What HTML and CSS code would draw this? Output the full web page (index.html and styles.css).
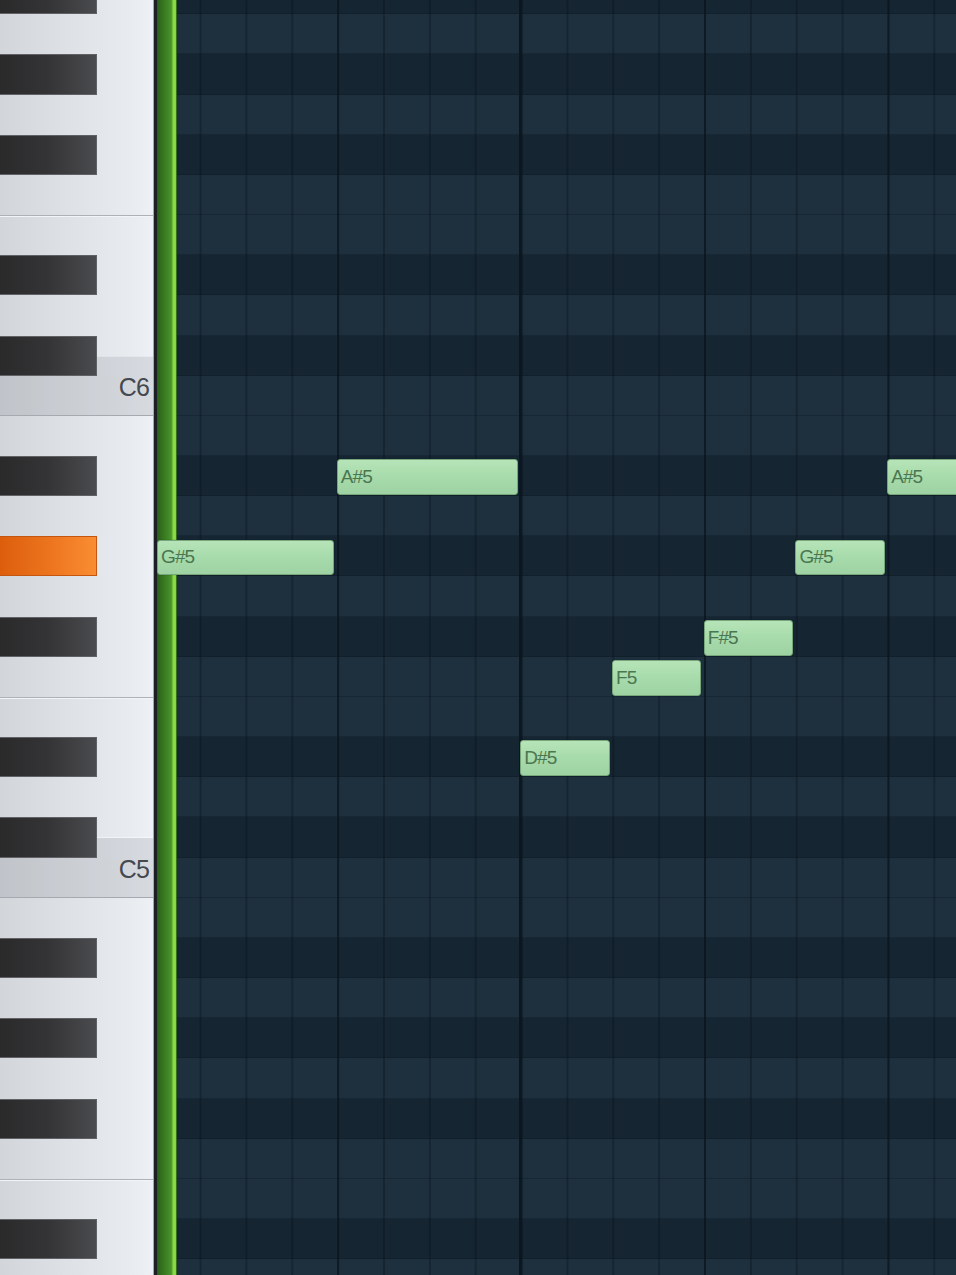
FILE: index.html
```html
<!DOCTYPE html>
<html>
<head>
<meta charset="utf-8">
<title>Piano Roll</title>
<link rel="stylesheet" href="styles.css">
</head>
<body>
<div class="roll">
  <div class="keys">
    <div class="k b"><div class="bk"></div></div>
    <div class="k"></div>
    <div class="k b"><div class="bk"></div></div>
    <div class="k"></div>
    <div class="k b"><div class="bk"></div></div>
    <div class="k"></div>
    <div class="k e"></div>
    <div class="k b"><div class="bk"></div></div>
    <div class="k"></div>
    <div class="k b cs"><div class="bk"></div></div>
    <div class="k c"><span class="lbl">C6</span></div>
    <div class="k"></div>
    <div class="k b"><div class="bk"></div></div>
    <div class="k"></div>
    <div class="k b"><div class="bk on"></div></div>
    <div class="k"></div>
    <div class="k b"><div class="bk"></div></div>
    <div class="k"></div>
    <div class="k e"></div>
    <div class="k b"><div class="bk"></div></div>
    <div class="k"></div>
    <div class="k b cs"><div class="bk"></div></div>
    <div class="k c"><span class="lbl">C5</span></div>
    <div class="k"></div>
    <div class="k b"><div class="bk"></div></div>
    <div class="k"></div>
    <div class="k b"><div class="bk"></div></div>
    <div class="k"></div>
    <div class="k b"><div class="bk"></div></div>
    <div class="k"></div>
    <div class="k e"></div>
    <div class="k b"><div class="bk"></div></div>
    <div class="k"></div>
  </div>
  <div class="grid">
    <div class="r d"></div>
    <div class="r"></div>
    <div class="r d"></div>
    <div class="r"></div>
    <div class="r d"></div>
    <div class="r"></div>
    <div class="r"></div>
    <div class="r d"></div>
    <div class="r"></div>
    <div class="r d"></div>
    <div class="r"></div>
    <div class="r"></div>
    <div class="r d"></div>
    <div class="r"></div>
    <div class="r d"></div>
    <div class="r"></div>
    <div class="r d"></div>
    <div class="r"></div>
    <div class="r"></div>
    <div class="r d"></div>
    <div class="r"></div>
    <div class="r d"></div>
    <div class="r"></div>
    <div class="r"></div>
    <div class="r d"></div>
    <div class="r"></div>
    <div class="r d"></div>
    <div class="r"></div>
    <div class="r d"></div>
    <div class="r"></div>
    <div class="r"></div>
    <div class="r d"></div>
    <div class="r"></div>

    <div class="lines"></div>
    <div class="edge"></div>
    <div class="playhead"></div>

    <div class="note" style="--s:0;--l:4;--r:14">G#5</div>
    <div class="note" style="--s:4;--l:4;--r:12">A#5</div>
    <div class="note" style="--s:8;--l:2;--r:19">D#5</div>
    <div class="note" style="--s:10;--l:2;--r:17">F5</div>
    <div class="note" style="--s:12;--l:2;--r:16">F#5</div>
    <div class="note" style="--s:14;--l:2;--r:14">G#5</div>
    <div class="note" style="--s:16;--l:4;--r:12">A#5</div>
  </div>
</div>
</body>
</html>
```
FILE: styles.css
```css
html, body {
  margin: 0;
  padding: 0;
  background: #1b2c3a;
  overflow: hidden;
}

.roll {
  --rh: 40.17px;
  --step: 45.86px;
  display: flex;
  align-items: flex-start;
  width: 956px;
  height: 1275px;
  overflow: hidden;
  font-family: "Liberation Sans", Arial, sans-serif;
}

/* ---------- keyboard ---------- */
.keys {
  flex: 0 0 154px;
  box-sizing: border-box;
  width: 154px;
  margin-top: -25.87px;
  display: flex;
  flex-direction: column;
  border-right: 1px solid #a3a8ae;
  background: linear-gradient(to right, #d2d5da 0%, #dee1e6 45%, #e8ebf0 85%, #edf0f5 100%);
}

.k {
  height: var(--rh);
  flex: 0 0 var(--rh);
  display: flex;
  justify-content: flex-start;
  align-items: stretch;
  box-sizing: border-box;
}

.k.e {
  box-shadow: inset 0 1px 0 #aeb2b8, inset 0 2px 0 #f2f4f7;
}

.k.cs {
  background: linear-gradient(to bottom, rgba(0,0,0,0) 0 50%, rgba(255,255,255,0.5) 50%, rgba(85,92,102,0.14) calc(50% + 1px));
}

.k.c {
  background: rgba(85, 92, 102, 0.14);
  box-shadow: inset 0 -1px 0 #a6aab0;
  justify-content: flex-end;
  align-items: flex-start;
}

.lbl {
  font-size: 25px;
  line-height: 23px;
  color: #44484f;
  padding-right: 4px;
  letter-spacing: -0.8px;
}

.bk {
  width: 97px;
  box-sizing: border-box;
  background: linear-gradient(to right, #2a2a2b 0%, #343436 50%, #4a4b4e 100%);
  border: 1px solid #5f6165;
  border-left: none;
}

.bk.on {
  background: linear-gradient(to right, #dc5e0c 0%, #ee7620 55%, #f98d32 100%);
  border-color: #c4560f;
}

/* ---------- grid ---------- */
.grid {
  flex: 1 1 auto;
  position: relative;
  margin-top: -25.87px;
  display: flex;
  flex-direction: column;
}

.r {
  height: var(--rh);
  flex: 0 0 var(--rh);
  background: #1e303e;
  box-shadow: inset 0 -1px 0 rgba(12, 24, 33, 0.35);
}

.r.d {
  background: #162532;
}

.lines {
  position: absolute;
  inset: 0;
  background-image:
    linear-gradient(#0b1720, #0b1720),
    linear-gradient(to right, rgba(8, 18, 26, 0.55) 0 2px, transparent 2px),
    linear-gradient(to right, rgba(8, 18, 26, 0.38) 0 2px, transparent 2px);
  background-size: 2px 100%, calc(var(--step) * 4) 100%, var(--step) 100%;
  background-position: 365px 0, -0.3px 0, -0.3px 0;
  background-repeat: no-repeat, repeat-x, repeat-x;
}

.edge {
  position: absolute;
  left: 0;
  top: 0;
  bottom: 0;
  width: 3px;
  background: #1a2026;
}

.playhead {
  position: absolute;
  left: 3px;
  top: 0;
  bottom: 0;
  width: 20px;
  background: linear-gradient(to right,
    #2a5e17 0%, #377520 30%, #428a27 60%, #4b962c 72%,
    #70c23a 78%, #92dc4b 84%, #88d445 93%, #3a7821 97%, #22441a 100%);
}

.note {
  --x: calc(var(--s) * var(--step) - 0.6px);
  position: absolute;
  box-sizing: border-box;
  left: max(3px, var(--x));
  width: calc((var(--s) + var(--l)) * var(--step) - 3px - max(3px, var(--x)));
  top: calc(var(--r) * var(--rh) + 3px);
  height: 35.8px;
  padding-left: 3px;
  display: flex;
  align-items: center;
  border: 1px solid #76a67a;
  border-radius: 3px;
  background: linear-gradient(to bottom, #b6e4b8 0%, #a7dbab 50%, #9ed2a2 100%);
  box-shadow: 0 0 1px rgba(10, 30, 20, 0.6);
  color: #4a7650;
  font-size: 19px;
  letter-spacing: -0.9px;
  white-space: nowrap;
  overflow: hidden;
}
```
